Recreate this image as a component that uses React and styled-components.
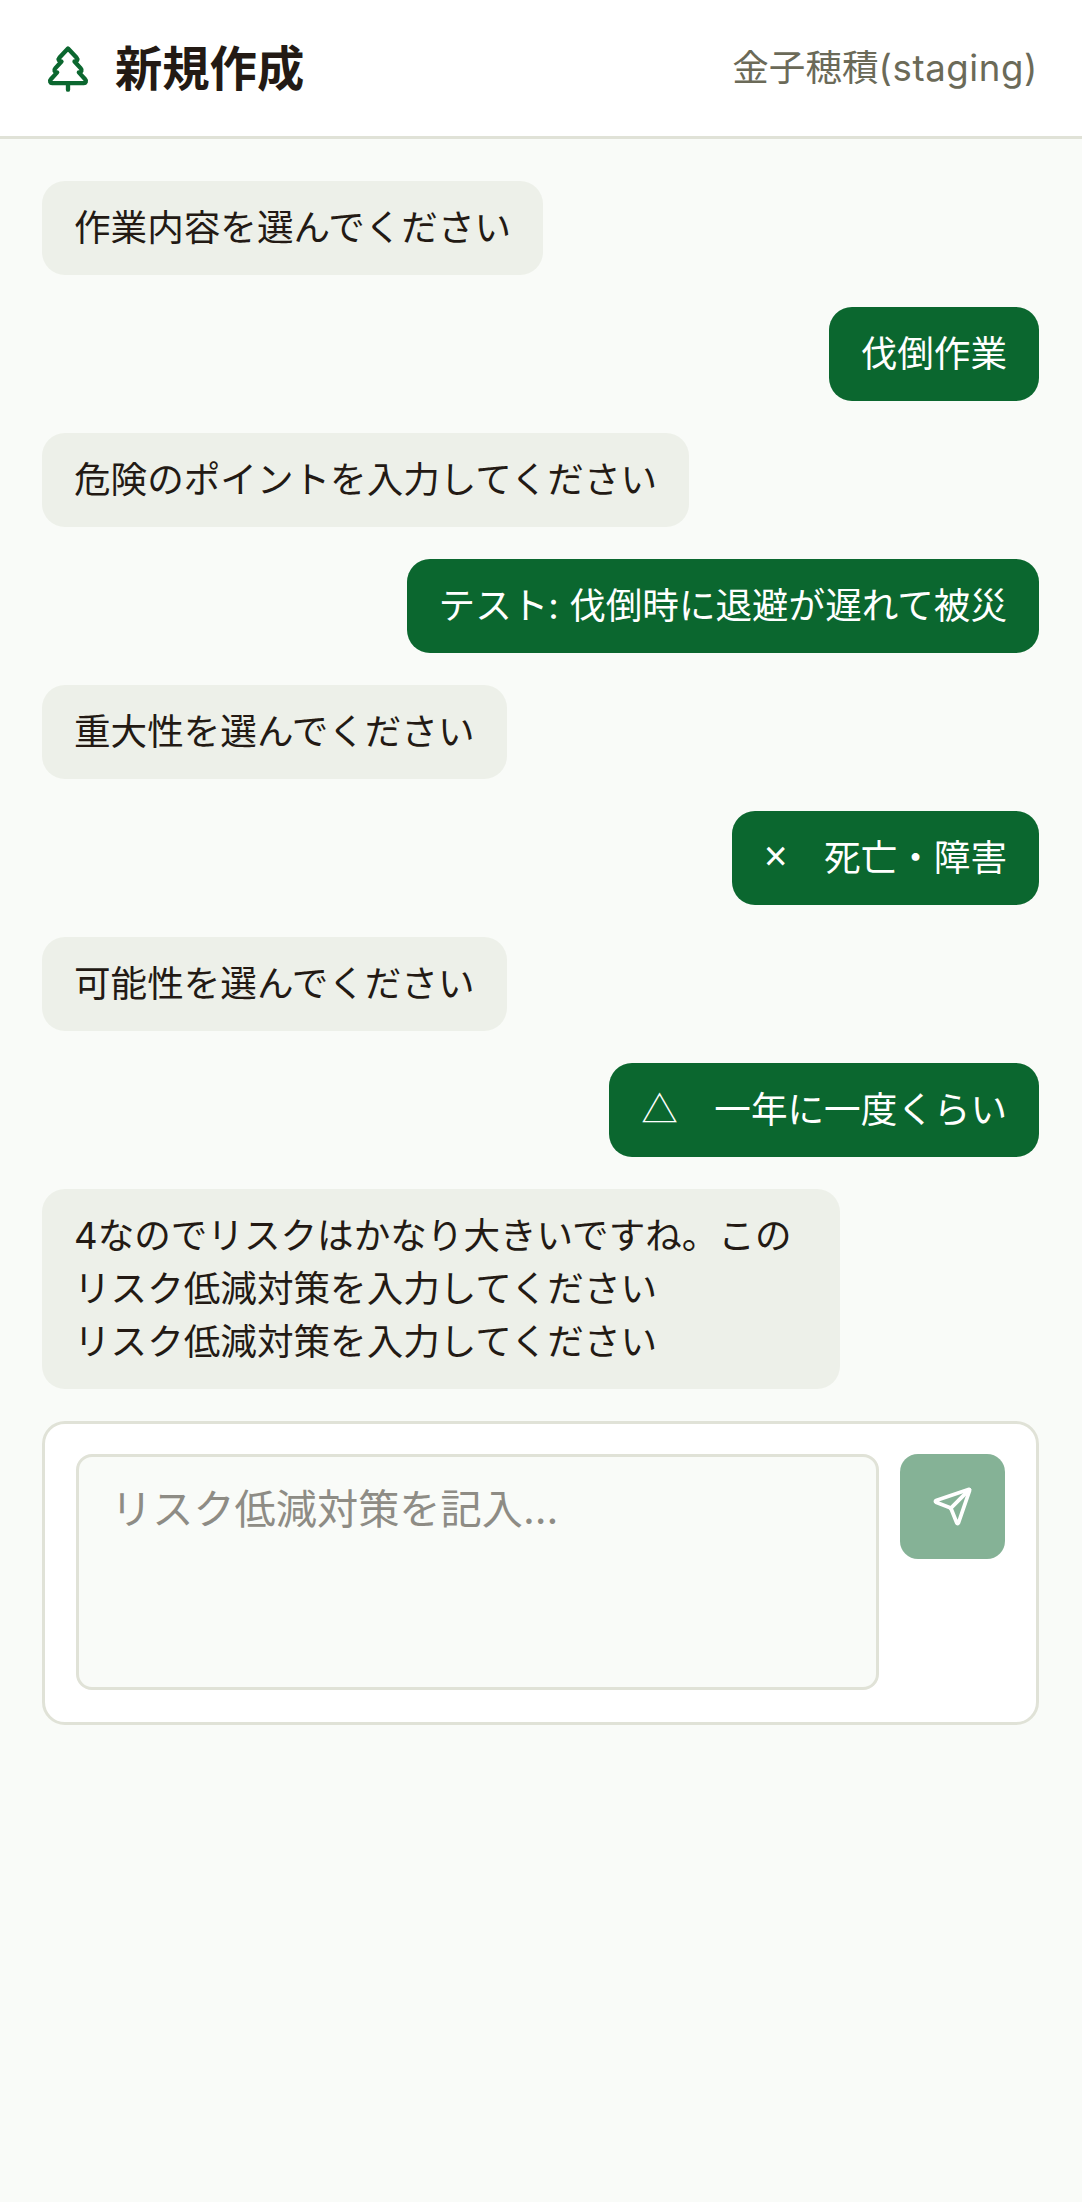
import React from "react";
import styled, { createGlobalStyle } from "styled-components";
import { TreePine, Send } from "lucide-react";

const GlobalStyle = createGlobalStyle`
  html, body {
    margin: 0;
    padding: 0;
    background: #f9fbf8;
    font-family: Inter, "Noto Sans CJK JP", sans-serif;
  }
  * {
    box-sizing: border-box;
  }
`;

const Page = styled.div`
  width: 1082px;
  min-height: 2202px;
  background: #f9fbf8;
`;

const Header = styled.header`
  height: 139px;
  padding: 0 44px 0 42px;
  display: flex;
  align-items: center;
  justify-content: space-between;
  background: #fff;
  border-bottom: 3px solid #e0e2d7;
`;

const Brand = styled.div`
  display: flex;
  align-items: center;
  gap: 21px;
  color: #0b672f;
`;

const Title = styled.h1`
  margin: 0;
  padding-top: 2px;
  font-size: 47.3px;
  font-weight: 700;
  line-height: 1.4;
  color: #231a14;
`;

const UserName = styled.span`
  padding-top: 2px;
  font-size: 36.6px;
  line-height: 1.4;
  color: #6b6a58;
`;

const Latin = styled.span`
  letter-spacing: 0.6px;
`;

const Chat = styled.main`
  padding: 42px 43px 0 42px;
  display: flex;
  flex-direction: column;
  gap: 32px;
`;

const Bubble = styled.div`
  align-self: ${({ $mine }) => ($mine ? "flex-end" : "flex-start")};
  max-width: 80%;
  padding: 21px 32px 20px;
  border-radius: 23px;
  font-size: 36.6px;
  line-height: 53px;
  white-space: pre-wrap;
  background: ${({ $mine }) => ($mine ? "#0b672f" : "#edf0e9")};
  color: ${({ $mine }) => ($mine ? "#fff" : "#231a14")};
`;

const Mark = styled.span`
  font-family: "Noto Sans", "Noto Sans CJK JP", sans-serif;
  font-size: ${({ $size }) => $size || "36.6px"};
  line-height: 1;
`;

const Composer = styled.form`
  display: flex;
  align-items: flex-start;
  gap: 21px;
  padding: 30px 31px 32px;
  background: #fff;
  border: 3px solid #e0e2d7;
  border-radius: 23px;
`;

const Input = styled.textarea`
  flex: 1;
  height: 236px;
  padding: 22px 32px;
  resize: none;
  outline: none;
  font-family: inherit;
  font-size: 41.2px;
  line-height: 60px;
  color: #231a14;
  background: #f9fbf8;
  border: 3px solid #e0e2d7;
  border-radius: 16px;

  &::placeholder {
    color: #8e8c85;
    opacity: 1;
  }
`;

const SendButton = styled.button`
  flex: none;
  width: 105px;
  height: 105px;
  padding: 0;
  display: flex;
  align-items: center;
  justify-content: center;
  color: #fff;
  background: #85b296;
  border: none;
  border-radius: 18px;
`;

const messages = [
  { text: "作業内容を選んでください" },
  { text: "伐倒作業", mine: true },
  { text: "危険のポイントを入力してください" },
  { text: "テスト: 伐倒時に退避が遅れて被災", mine: true },
  { text: "重大性を選んでください" },
  { mark: "×", markSize: "41px", text: "　死亡・障害", mine: true },
  { text: "可能性を選んでください" },
  { mark: "△", text: "　一年に一度くらい", mine: true },
  {
    text: "4なのでリスクはかなり大きいですね。このリスク低減対策を入力してください\nリスク低減対策を入力してください",
  },
];

const App = () => {
  return (
    <Page>
      <GlobalStyle />
      <Header>
        <Brand>
          <TreePine size={52} strokeWidth={2} />
          <Title>新規作成</Title>
        </Brand>
        <UserName>
          金子穂積<Latin>(staging)</Latin>
        </UserName>
      </Header>
      <Chat>
        {messages.map((message, index) => (
          <Bubble key={index} $mine={message.mine}>
            {message.mark && <Mark $size={message.markSize}>{message.mark}</Mark>}
            {message.text}
          </Bubble>
        ))}
        <Composer>
          <Input placeholder="リスク低減対策を記入..." />
          <SendButton type="button" aria-label="送信">
            <Send size={41} strokeWidth={2.2} />
          </SendButton>
        </Composer>
      </Chat>
    </Page>
  );
};

export default App;
